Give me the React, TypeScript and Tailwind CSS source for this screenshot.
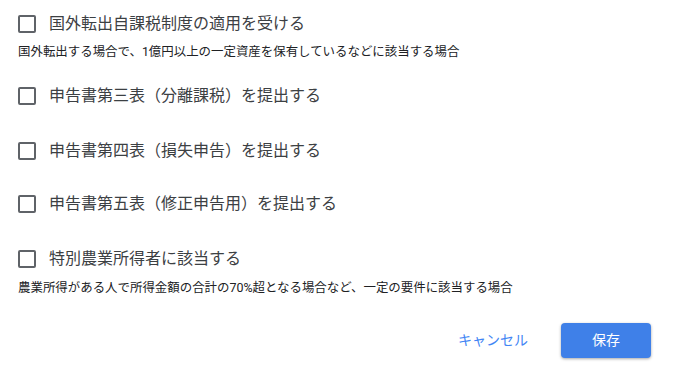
import React from "react";

const font = { fontFamily: 'Roboto, "Noto Sans CJK JP", sans-serif' };

function Row({ label }: { label: string }) {
  return (
    <label className="flex h-[30px] items-center">
      <span className="box-border h-[18px] w-[18px] rounded-[2px] border-2 border-[#5f6368] bg-white" />
      <span className="ml-[13px] text-[16px] leading-[30px] text-[#3c4043]">{label}</span>
    </label>
  );
}

function Note({ text }: { text: string }) {
  return <p className="text-[12.45px] leading-[16px] text-[#202124]">{text}</p>;
}

export default function App() {
  return (
    <div className="h-[366px] w-[678px] bg-white pl-[18px] pt-[9px]" style={font}>
      <Row label="国外転出自課税制度の適用を受ける" />
      <div className="mt-[5px]">
        <Note text="国外転出する場合で、1億円以上の一定資産を保有しているなどに該当する場合" />
      </div>
      <div className="mt-[21px]">
        <Row label="申告書第三表（分離課税）を提出する" />
      </div>
      <div className="mt-[25px]">
        <Row label="申告書第四表（損失申告）を提出する" />
      </div>
      <div className="mt-[23px]">
        <Row label="申告書第五表（修正申告用）を提出する" />
      </div>
      <div className="mt-[25px]">
        <Row label="特別農業所得者に該当する" />
      </div>
      <div className="mt-[6px]">
        <Note text="農業所得がある人で所得金額の合計の70%超となる場合など、一定の要件に該当する場合" />
      </div>
      <div className="mt-[27px] flex justify-end pr-[27px]">
        <button className="mr-[17px] h-[35px] px-[16px] text-[14px] text-[#4285f4]">キャンセル</button>
        <button className="h-[35px] w-[90px] rounded-[4px] bg-[#3f80e8] text-[14px] text-white shadow-[0_1px_3px_rgba(0,0,0,0.35)]">
          保存
        </button>
      </div>
    </div>
  );
}
